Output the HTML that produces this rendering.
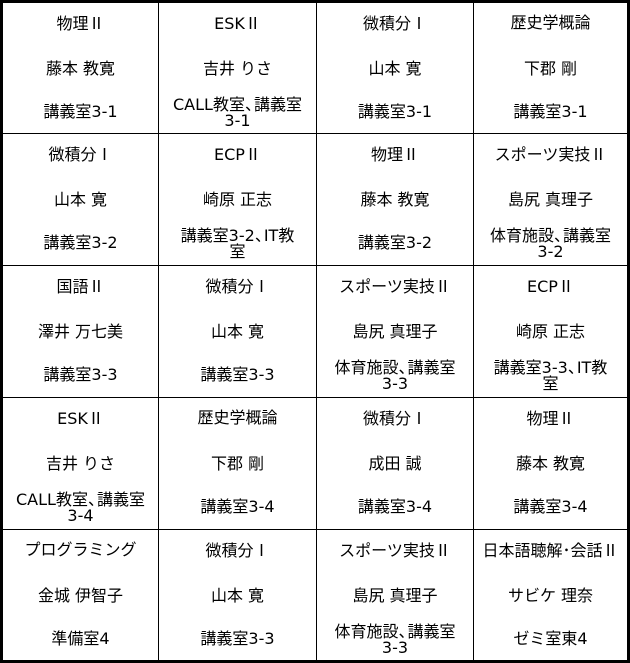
<!DOCTYPE html>
<html><head><meta charset="utf-8"><style>
html,body{margin:0;padding:0;background:#fff}
body{width:630px;height:663px;position:relative;overflow:hidden;font-family:"DejaVu Sans","Noto Sans CJK JP",sans-serif;font-size:16px;color:#000}
.j{font-family:"Noto Sans CJK JP",sans-serif}
.frame{position:absolute;left:0;top:0;width:624px;height:657px;border:3px solid #000}
.v{position:absolute;top:0;width:1px;height:663px;background:#000}
.h{position:absolute;left:0;height:1px;width:630px;background:#000}
.c{position:absolute;text-align:center;white-space:nowrap}
.l{position:absolute;left:0;right:0;line-height:17px}
.a{top:11px}.b{top:57px}
.t{position:absolute;left:0;right:0;top:92px;height:34px;display:flex;align-items:center;justify-content:center;line-height:16px}
.k{letter-spacing:-7px;font-family:"Noto Sans CJK JP",sans-serif}
</style></head><body>
<div class="frame"></div>
<div class="v" style="left:158px"></div><div class="v" style="left:316px"></div><div class="v" style="left:473px"></div>
<div class="h" style="top:133px"></div><div class="h" style="top:265px"></div><div class="h" style="top:397px"></div><div class="h" style="top:529px"></div>
<div id="g"></div>
<script>
var X=[3,159,317,474],W=[155,157,156,153],Y=[3,134,266,398,530];
var K='<span class="k">、</span>';var R='<span class="j">Ⅱ</span>',I='<span class="j">Ⅰ</span>';
var d=[
[["物理"+R,"藤本 教寛","講義室3-1"],["ESK"+R,"吉井 りさ","CALL教室"+K+"講義室<br>3-1"],["微積分"+I,"山本 寛","講義室3-1"],["歴史学概論","下郡 剛","講義室3-1"]],
[["微積分"+I,"山本 寛","講義室3-2"],["ECP"+R,"崎原 正志","講義室3-2"+K+"IT教<br>室"],["物理"+R,"藤本 教寛","講義室3-2"],["スポーツ実技"+R,"島尻 真理子","体育施設"+K+"講義室<br>3-2"]],
[["国語"+R,"澤井 万七美","講義室3-3"],["微積分"+I,"山本 寛","講義室3-3"],["スポーツ実技"+R,"島尻 真理子","体育施設"+K+"講義室<br>3-3"],["ECP"+R,"崎原 正志","講義室3-3"+K+"IT教<br>室"]],
[["ESK"+R,"吉井 りさ","CALL教室"+K+"講義室<br>3-4"],["歴史学概論","下郡 剛","講義室3-4"],["微積分"+I,"成田 誠","講義室3-4"],["物理"+R,"藤本 教寛","講義室3-4"]],
[["プログラミング","金城 伊智子","準備室4"],["微積分"+I,"山本 寛","講義室3-3"],["スポーツ実技"+R,"島尻 真理子","体育施設"+K+"講義室<br>3-3"],["日本語聴解･会話"+R,"サビケ 理奈","ゼミ室東4"]]
];
var h="";
for(var r=0;r<5;r++)for(var c=0;c<4;c++){var e=d[r][c];
h+='<div class="c" style="left:'+X[c]+'px;top:'+Y[r]+'px;width:'+W[c]+'px;height:130px"><div class="l a">'+e[0]+'</div><div class="l b">'+e[1]+'</div><div class="t"><div>'+e[2]+'</div></div></div>';}
document.getElementById("g").innerHTML=h;
</script>
</body></html>
